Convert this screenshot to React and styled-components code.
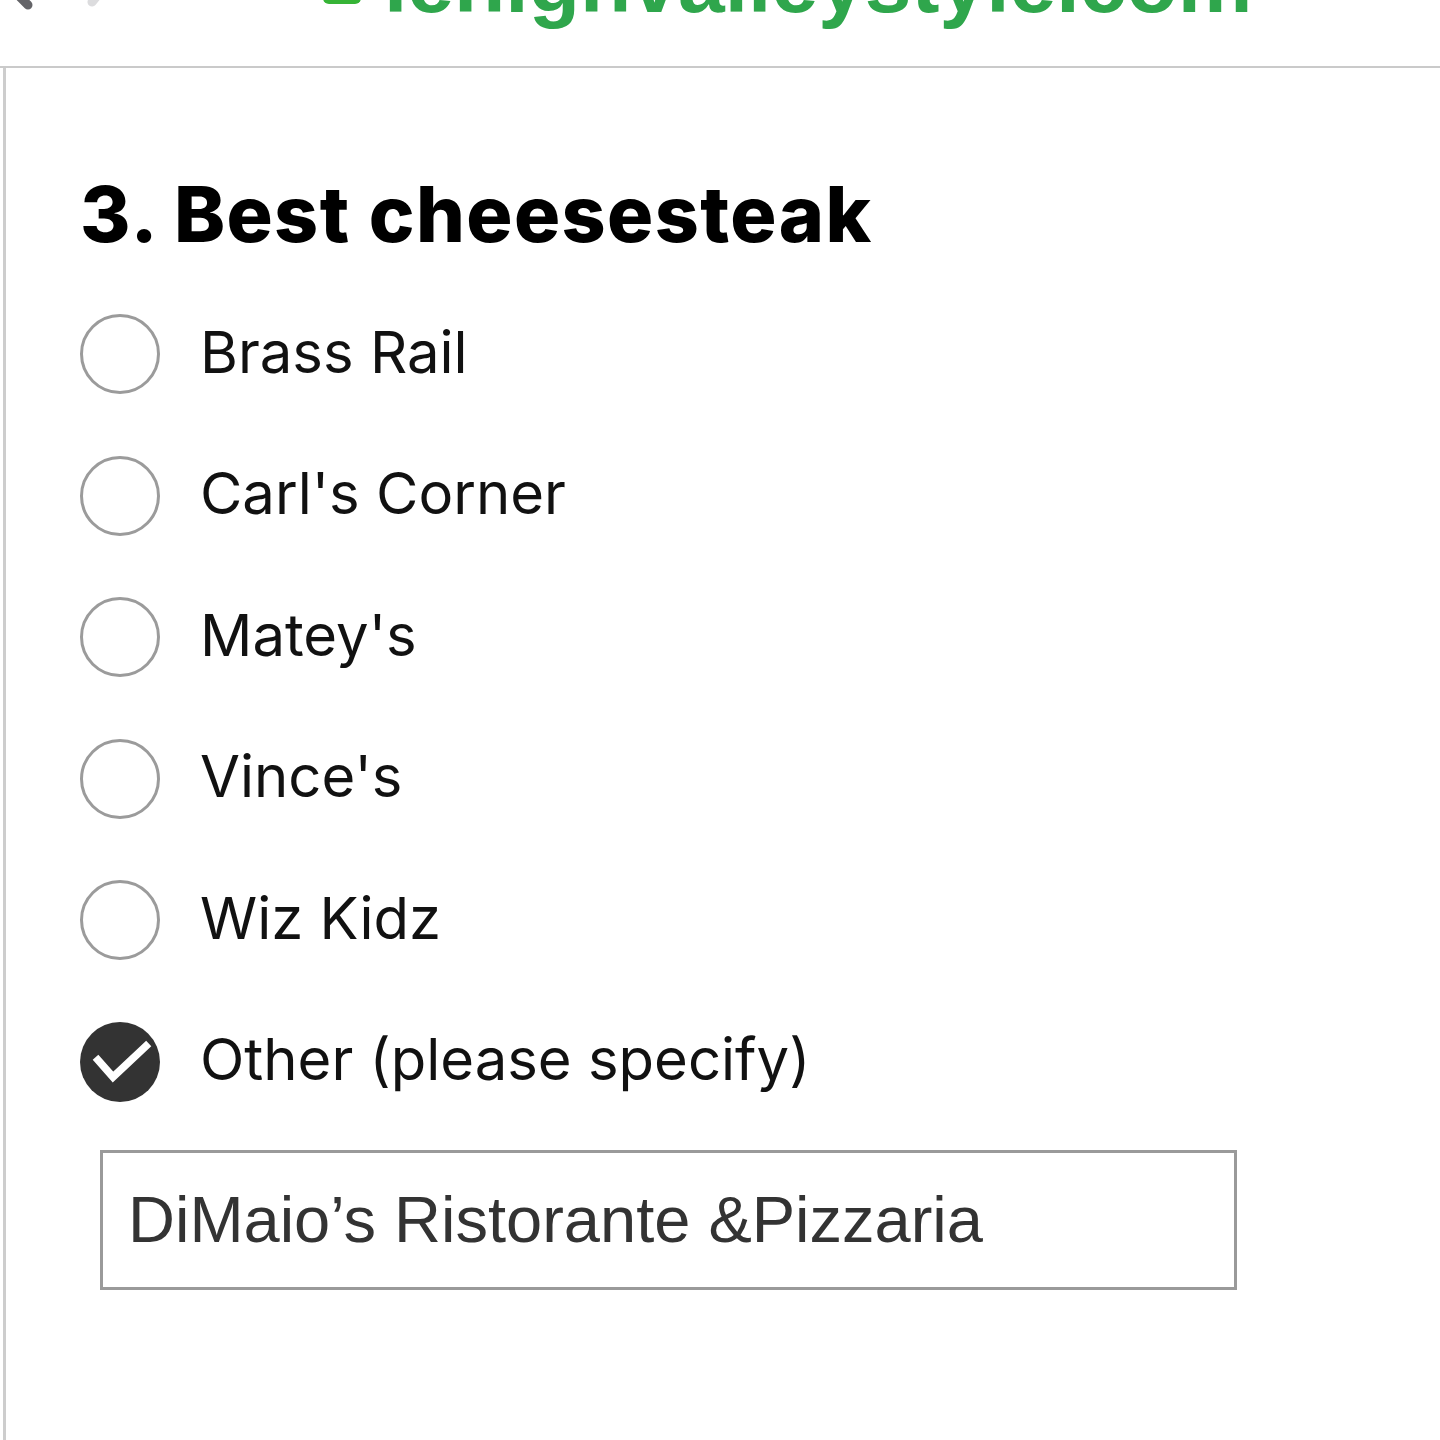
import React from "react";
import styled, { createGlobalStyle } from "styled-components";

const Global = createGlobalStyle`
  html, body { margin: 0; padding: 0; background: #fff; }
  body { font-family: "Inter", "Liberation Sans", sans-serif; color: #000; }
  * { box-sizing: border-box; }
`;

const Page = styled.div`
  width: 1440px;
  min-height: 1440px;
  display: flex;
  flex-direction: column;
  overflow: hidden;
`;

const AddressBar = styled.header`
  height: 68px;
  flex: none;
  display: flex;
  align-items: flex-end;
  overflow: hidden;
  border-bottom: 2px solid #cacaca;
  background: #fff;
`;

const NavIcon = styled.svg`
  flex: none;
  margin-left: ${(p) => p.$left}px;
  margin-bottom: ${(p) => p.$bottom}px;
`;

const Url = styled.div`
  display: flex;
  align-items: flex-end;
  margin-left: ${(p) => p.$left}px;
  margin-bottom: 41px;
  font-family: "Liberation Sans", Arial, sans-serif;
  font-weight: 700;
  font-size: 84px;
  line-height: 1;
  color: #2fa64c;
  white-space: nowrap;
`;

const Lock = styled.svg`
  flex: none;
  margin-right: 22px;
  margin-bottom: 20px;
`;

const Panel = styled.main`
  flex: 1;
  min-height: 1372px;
  margin-left: 3px;
  border-left: 3px solid #cdcdcd;
  padding: 108px 0 0 74px;
`;

const Question = styled.h2`
  margin: 0;
  font-family: "Inter", sans-serif;
  font-weight: 800;
  font-size: 77px;
  line-height: 1;
  letter-spacing: 1.4px;
  color: #000;
`;

const Options = styled.div`
  display: flex;
  flex-direction: column;
  gap: 61.6px;
  margin-top: 61px;
`;

const Option = styled.label`
  display: flex;
  align-items: center;
  gap: 40px;
  height: 80px;
  cursor: pointer;
`;

const Radio = styled.span`
  flex: none;
  width: 80px;
  height: 80px;
  border-radius: 50%;
  border: ${(p) => (p.$checked ? "none" : "3px solid #9b9b9b")};
  background: ${(p) => (p.$checked ? "#333" : "#fff")};
  display: flex;
  align-items: center;
  justify-content: center;
`;

const OptionText = styled.span`
  font-family: "Inter", sans-serif;
  font-weight: 400;
  font-size: 58px;
  line-height: 1;
  color: #111;
  margin-top: -5px;
`;

const OtherInput = styled.input`
  display: block;
  margin: 48px 0 0 20px;
  width: 1137px;
  height: 140px;
  border: 3px solid #9a9a9a;
  border-radius: 0;
  padding: 0 0 0 25px;
  font-family: "Liberation Sans", Arial, sans-serif;
  font-size: 65px;
  color: #333;
  background: #fff;
  outline: none;
`;

const options = [
  "Brass Rail",
  "Carl's Corner",
  "Matey's",
  "Vince's",
  "Wiz Kidz",
  "Other (please specify)",
];

export default function App() {
  return (
    <Page>
      <Global />
      <AddressBar>
        <NavIcon $left={0} $bottom={51} width="40" height="60" viewBox="0 0 40 60">
          <path d="M34 4 L8 30 L28 50" fill="none" stroke="#646468" strokeWidth="9" strokeLinecap="round" strokeLinejoin="round" />
        </NavIcon>
        <NavIcon $left={42} $bottom={58} width="40" height="60" viewBox="0 0 40 60">
          <path d="M6 4 L30 30 L10 54" fill="none" stroke="#dcdcde" strokeWidth="9" strokeLinecap="round" strokeLinejoin="round" />
        </NavIcon>
        <Url $left={200}>
          <Lock width="40" height="40" viewBox="0 0 40 40">
            <path d="M11 10 V4 a9 9 0 0 1 18 0 V10" fill="none" stroke="#36b436" strokeWidth="5" />
            <rect x="1" y="10" width="38" height="29" rx="6" fill="#36b436" />
          </Lock>
          lehighvalleystyle.com
        </Url>
      </AddressBar>
      <Panel>
        <Question>3. Best cheesesteak</Question>
        <Options>
          {options.map((o, i) => {
            const checked = i === options.length - 1;
            return (
              <Option key={o}>
                <Radio $checked={checked}>
                  {checked && (
                    <svg width="80" height="80" viewBox="0 0 80 80">
                      <path d="M18 38 L33 55 L66 24" fill="none" stroke="#fff" strokeWidth="7.5" strokeLinecap="square" strokeLinejoin="miter" />
                    </svg>
                  )}
                </Radio>
                <OptionText>{o}</OptionText>
              </Option>
            );
          })}
        </Options>
        <OtherInput readOnly value="DiMaio’s Ristorante &Pizzaria" />
      </Panel>
    </Page>
  );
}
